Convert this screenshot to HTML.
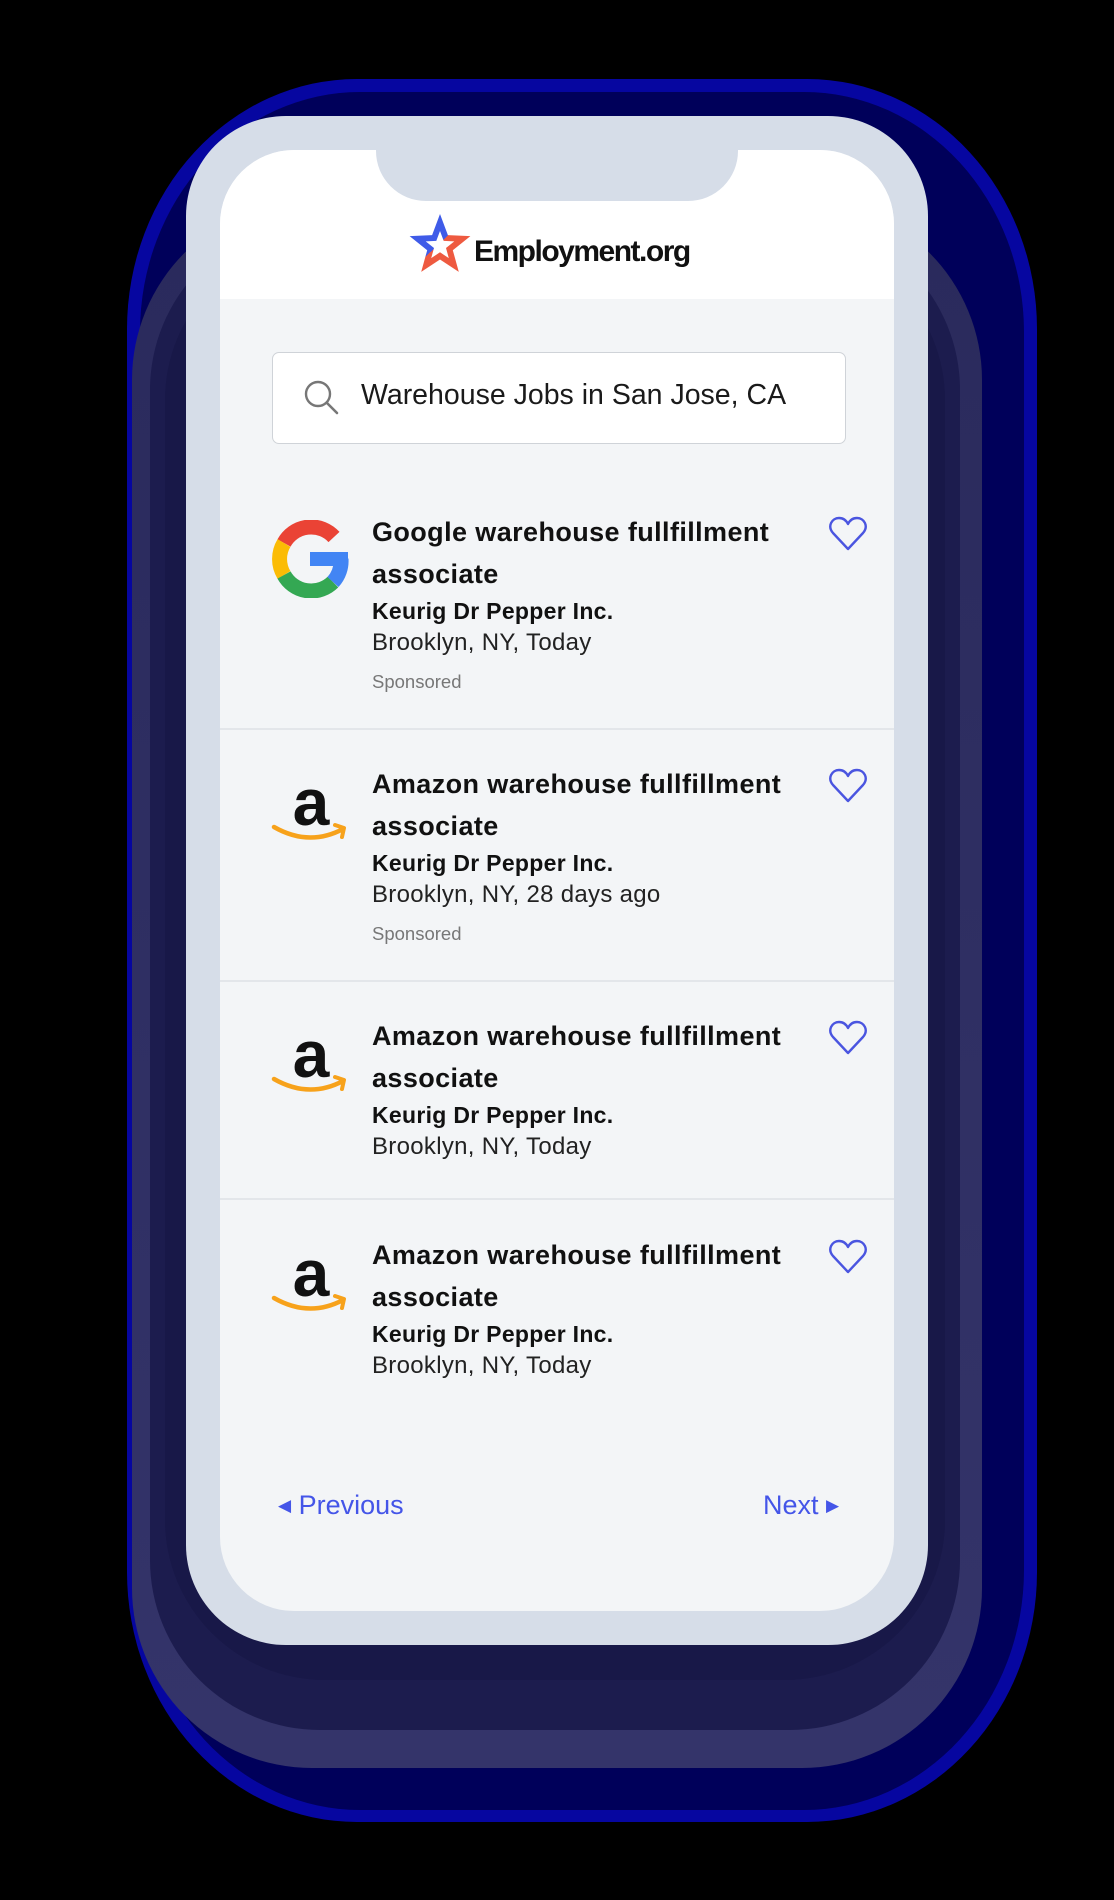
<!DOCTYPE html>
<html><head><meta charset="utf-8">
<style>
*{margin:0;padding:0;box-sizing:border-box}
html,body{width:1114px;height:1900px;background:#000;overflow:hidden;font-family:"Liberation Sans",sans-serif}
.abs{position:absolute}
.g1{left:127px;top:79px;width:910px;height:1743px;border-radius:230px/250px;background:#0606a0}
.g2{left:140px;top:92px;width:884px;height:1718px;border-radius:220px/240px;background:#00005a}
.g3{left:132px;top:200px;width:850px;height:1568px;border-radius:180px;background:linear-gradient(#2a2a5c,#34346a)}
.g4{left:150px;top:220px;width:810px;height:1510px;border-radius:170px;background:#1c1c4e}
.g5{left:165px;top:240px;width:780px;height:1440px;border-radius:160px;background:#181848}
.frame{left:186px;top:116px;width:742px;height:1529px;border-radius:100px;background:#d6dde8}
.screen{left:220px;top:150px;width:674px;height:1461px;border-radius:74px;background:#f3f5f7;overflow:hidden}
.hdr{left:0;top:0;width:674px;height:149px;background:#fff}
.notch{left:156px;top:0;width:362px;height:51px;background:#d6dde8;border-radius:0 0 50px 50px}
.brand{left:254px;top:85px;font-weight:bold;font-size:30px;letter-spacing:-1.5px;color:#111}
.search{left:52px;top:202px;width:574px;height:92px;background:#fff;border:1.5px solid #cfd3d8;border-radius:7px}
.stext{left:141px;top:229px;font-size:28.5px;color:#1a1a1a}
.t{position:absolute;left:152px;font-weight:bold;font-size:27px;letter-spacing:0.4px;color:#111;line-height:42px}
.c{position:absolute;left:152px;font-weight:bold;font-size:23px;letter-spacing:0.3px;color:#111}
.l{position:absolute;left:152px;font-size:24px;letter-spacing:0.3px;color:#222}
.s{position:absolute;left:152px;font-size:18.5px;color:#777}
.div{position:absolute;left:0;width:674px;height:2px;background:#e3e6ea}
.heart{position:absolute;left:608px}
.nav{position:absolute;top:1340px;font-size:27px;color:#4455e8}
.amz{position:absolute;left:51px;width:80px;height:70px}
</style></head><body>
<div class="abs g1"></div><div class="abs g2"></div><div class="abs g3"></div><div class="abs g4"></div><div class="abs g5"></div>
<div class="abs frame"></div>
<div class="abs screen">
 <div class="abs hdr"></div>
 <div class="abs notch"></div>
 <svg class="abs" style="left:187px;top:60px" width="66" height="66" viewBox="0 0 66 66">
  <defs><linearGradient id="sg" x1="0" y1="0" x2="1" y2="1"><stop offset="0.5" stop-color="#3f5be8"/><stop offset="0.5" stop-color="#ee5a40"/></linearGradient></defs>
  <polygon points="33,4 40.9,25.1 63.4,26.1 45.8,40.2 51.8,61.9 33,49.5 14.2,61.9 20.2,40.2 2.6,26.1 25.1,25.1" fill="url(#sg)"/>
  <polygon points="33,21 36.7,30.9 47.3,31.4 39,38 41.8,48.1 33,42.3 24.2,48.1 27,38 18.7,31.4 29.3,30.9" fill="#fff"/>
 </svg>
 <div class="abs brand">Employment.org</div>
 <div class="abs search"></div>
 <svg class="abs" style="left:82px;top:228px" width="40" height="40" viewBox="0 0 40 40"><circle cx="16" cy="16" r="12" fill="none" stroke="#777" stroke-width="2.4"/><line x1="25" y1="25" x2="35" y2="35" stroke="#777" stroke-width="2.6" stroke-linecap="round"/></svg>
 <div class="abs stext">Warehouse Jobs in San Jose, CA</div>

 <svg class="abs" style="left:51px;top:370px" width="78" height="78" viewBox="0 0 78 78">
  <g fill="none" stroke-width="15">
   <path d="M63 17 A31 31 0 0 0 13 23" stroke="#ea4335"/>
   <path d="M13 23 A31 31 0 0 0 13 55" stroke="#fbbc05"/>
   <path d="M13 55 A31 31 0 0 0 62 62" stroke="#34a853"/>
   <path d="M62 62 A31 31 0 0 0 70 39" stroke="#4285f4"/>
  </g>
  <rect x="39" y="32" width="38" height="14" fill="#4285f4"/>
 </svg>
 <div class="t" style="top:361px">Google warehouse fullfillment<br>associate</div>
 <div class="c" style="top:448px">Keurig Dr Pepper Inc.</div>
 <div class="l" style="top:479px">Brooklyn, NY, Today</div>
 <div class="s" style="top:521px">Sponsored</div>
 <svg class="heart" style="top:366px" width="40" height="36" viewBox="0 0 40 36"><path d="M20 33 L5 17 C-1 10 4 2 11 2 C15 2 18 4 20 8 C22 4 25 2 29 2 C36 2 41 10 35 17 Z" fill="none" stroke="#4a55e0" stroke-width="2.4" stroke-linejoin="round"/></svg>
 <div class="div" style="top:578px"></div>

 <div style="position:absolute;left:0;top:252px;width:674px;height:600px">
  <svg class="amz" style="top:375px" viewBox="0 0 80 70"><text x="40" y="48" text-anchor="middle" font-family="Liberation Sans" font-weight="bold" font-size="66" fill="#111">a</text><path d="M3 50 Q38 70 72 52" fill="none" stroke="#f7a21b" stroke-width="4.5" stroke-linecap="round"/><path d="M64 48 L73 51 L71 60" fill="none" stroke="#f7a21b" stroke-width="4" stroke-linecap="round" stroke-linejoin="round"/></svg>
  <div class="t" style="top:361px">Amazon warehouse fullfillment<br>associate</div>
  <div class="c" style="top:448px">Keurig Dr Pepper Inc.</div>
  <div class="l" style="top:479px">Brooklyn, NY, 28 days ago</div>
  <div class="s" style="top:521px">Sponsored</div>
  <svg class="heart" style="top:366px" width="40" height="36" viewBox="0 0 40 36"><path d="M20 33 L5 17 C-1 10 4 2 11 2 C15 2 18 4 20 8 C22 4 25 2 29 2 C36 2 41 10 35 17 Z" fill="none" stroke="#4a55e0" stroke-width="2.4" stroke-linejoin="round"/></svg>
  <div class="div" style="top:578px"></div>
 </div>
 <div style="position:absolute;left:0;top:504px;width:674px;height:600px">
  <svg class="amz" style="top:375px" viewBox="0 0 80 70"><text x="40" y="48" text-anchor="middle" font-family="Liberation Sans" font-weight="bold" font-size="66" fill="#111">a</text><path d="M3 50 Q38 70 72 52" fill="none" stroke="#f7a21b" stroke-width="4.5" stroke-linecap="round"/><path d="M64 48 L73 51 L71 60" fill="none" stroke="#f7a21b" stroke-width="4" stroke-linecap="round" stroke-linejoin="round"/></svg>
  <div class="t" style="top:361px">Amazon warehouse fullfillment<br>associate</div>
  <div class="c" style="top:448px">Keurig Dr Pepper Inc.</div>
  <div class="l" style="top:479px">Brooklyn, NY, Today</div>
  <svg class="heart" style="top:366px" width="40" height="36" viewBox="0 0 40 36"><path d="M20 33 L5 17 C-1 10 4 2 11 2 C15 2 18 4 20 8 C22 4 25 2 29 2 C36 2 41 10 35 17 Z" fill="none" stroke="#4a55e0" stroke-width="2.4" stroke-linejoin="round"/></svg>
  <div class="div" style="top:544px"></div>
 </div>
 <div style="position:absolute;left:0;top:723px;width:674px;height:600px">
  <svg class="amz" style="top:375px" viewBox="0 0 80 70"><text x="40" y="48" text-anchor="middle" font-family="Liberation Sans" font-weight="bold" font-size="66" fill="#111">a</text><path d="M3 50 Q38 70 72 52" fill="none" stroke="#f7a21b" stroke-width="4.5" stroke-linecap="round"/><path d="M64 48 L73 51 L71 60" fill="none" stroke="#f7a21b" stroke-width="4" stroke-linecap="round" stroke-linejoin="round"/></svg>
  <div class="t" style="top:361px">Amazon warehouse fullfillment<br>associate</div>
  <div class="c" style="top:448px">Keurig Dr Pepper Inc.</div>
  <div class="l" style="top:479px">Brooklyn, NY, Today</div>
  <svg class="heart" style="top:366px" width="40" height="36" viewBox="0 0 40 36"><path d="M20 33 L5 17 C-1 10 4 2 11 2 C15 2 18 4 20 8 C22 4 25 2 29 2 C36 2 41 10 35 17 Z" fill="none" stroke="#4a55e0" stroke-width="2.4" stroke-linejoin="round"/></svg>
 </div>
 <div class="nav" style="left:58px"><span style="font-size:17px;position:relative;top:-3px">&#9664;</span> Previous</div>
 <div class="nav" style="left:543px">Next <span style="font-size:17px;position:relative;top:-3px">&#9654;</span></div>
</div>
</body></html>
